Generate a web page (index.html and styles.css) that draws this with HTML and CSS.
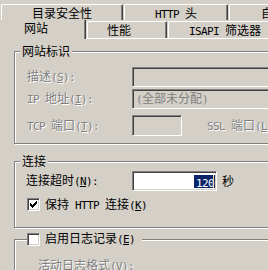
FILE: index.html
```html
<!DOCTYPE html>
<html lang="zh-CN">
<head>
<meta charset="utf-8">
<title>属性</title>
<link rel="stylesheet" href="styles.css">
</head>
<body>
<div class="tabs">
  <div class="tabrow back">
    <div class="tab t-dir">目录安全性</div>
    <div class="tab t-http"><span class="en">HTTP </span>头</div>
    <div class="tab t-err">自定义错误</div>
  </div>
  <div class="tabrow front">
    <div class="tab sel t-site">网站</div>
    <div class="tab t-perf">性能</div>
    <div class="tab t-isapi"><span class="en">ISAPI </span>筛选器</div>
  </div>
</div>
<div class="panel">
  <div class="group g-id">
    <div class="legend">网站标识</div>
    <div class="row r-desc">
      <span class="lbl dis">描述<span class="en">(<u>S</u>):</span></span>
      <span class="edit wide"></span>
    </div>
    <div class="row r-ip">
      <span class="lbl dis"><span class="en">IP </span>地址<span class="en">(<u>I</u>):</span></span>
      <span class="edit wide"><span class="etext"><span class="en">(</span>全部未分配<span class="en">)</span></span></span>
    </div>
    <div class="row r-port">
      <span class="lbl dis"><span class="en">TCP </span>端口<span class="en">(<u>T</u>):</span></span>
      <span class="edit port"></span>
      <span class="ssl dis"><span class="en">SSL </span>端口<span class="en">(<u>L</u>):</span></span>
    </div>
  </div>

  <div class="group g-conn">
    <div class="legend">连接</div>
    <div class="row r-timeout">
      <span class="lbl lbl-conn">连接超时<span class="en">(<u>N</u>):</span></span>
      <span class="edit on"><span class="selt"><span class="en">120</span></span><span class="caret"></span></span>
      <span class="unit">秒</span>
    </div>
    <div class="row r-keep">
      <span class="chk"><svg width="7" height="7" viewBox="0 0 7 7" shape-rendering="crispEdges"><path d="M0 2h1v3H0zM1 3h1v3H1zM2 4h1v3H2zM3 3h1v3H3zM4 2h1v3H4zM5 1h1v3H5zM6 0h1v3H6z" fill="#000"/></svg></span>
      <span class="chklbl">保持<span class="en"> HTTP </span>连接<span class="en">(<u>K</u>)</span></span>
    </div>
  </div>

  <div class="group g-log">
    <div class="legend legend-chk">
      <span class="chk"></span>
      <span class="chklbl">启用日志记录<span class="en">(<u>E</u>)</span></span>
    </div>
    <div class="dis logfmt">活动日志格式<span class="en">(<u>V</u>):</span></div>
  </div>
</div>
</body>
</html>
```
FILE: styles.css
```css
* { box-sizing: border-box; }
html, body { margin: 0; padding: 0; }
body {
  width: 268px;
  height: 270px;
  overflow: hidden;
  background: #D4D0C8;
  color: #000;
  font-family: "Noto Sans CJK SC", sans-serif;
  font-size: 12px;
  line-height: 12px;
}
.en {
  font-family: "DejaVu Sans Mono", monospace;
  font-size: 11px;
  letter-spacing: -0.62px;
  white-space: pre;
}
u { text-decoration: underline; text-underline-offset: 1px; }

/* tabs */
.tabs { padding-top: 4px; }
.tabrow { display: flex; white-space: nowrap; }
.tab {
  flex: none;
  background: #D4D0C8;
  border-top: 1px solid #fff;
  border-left: 1px solid #fff;
  border-right: 1px solid #404040;
  box-shadow: inset -1px 0 0 #808080;
  border-top-left-radius: 2px;
  border-top-right-radius: 2px;
  padding-top: 2px;
}
.back { height: 16px; padding-left: 1px; gap: 1px; }
.back .tab { height: 16px; text-align: center; }
.t-dir { width: 122px; }
.t-http { width: 104px; }
.t-err { width: 124px; }

.front {
  height: 19px;
  gap: 1px;
  align-items: flex-end;
  border-bottom: 1px solid #fff;
}
.front .tab { height: 17px; }
.front .sel {
  position: relative;
  height: 19px;
  margin-bottom: -1px;
  border-top: none;
  border-left: none;
  border-radius: 0;
}
.t-site { width: 86px; padding-left: 24px; }
.t-perf { width: 80px; padding-left: 19px; }
.t-isapi { width: 120px; padding-left: 20px; }

/* panel and group boxes */
.panel { padding: 12px 0 0 14px; }
.group {
  position: relative;
  width: 300px;
  border: 1px solid #808080;
  box-shadow: inset 1px 1px 0 #fff, 1px 1px 0 #fff;
}
.legend {
  position: absolute;
  top: -7px;
  left: 5px;
  padding: 0 2px;
  background: #D4D0C8;
  white-space: nowrap;
}
.g-id { height: 93px; padding: 15px 0 0 12px; }
.g-conn { margin-top: 17px; height: 67px; padding: 9px 0 0 11px; }
.g-log { margin-top: 11px; height: 60px; padding: 19px 0 0 23px; }

.row { display: flex; align-items: center; white-space: nowrap; }
.r-desc { height: 20px; margin-bottom: 2px; }
.r-ip { height: 20px; margin-bottom: 6px; }
.r-port { height: 21px; }
.r-timeout { height: 20px; margin-bottom: 7px; }
.r-keep { height: 13px; padding-left: 1px; gap: 5px; }

.lbl { flex: none; width: 105px; }
.lbl-conn { width: 106px; }
.dis { color: #808080; text-shadow: 1px 1px 0 #fff; }

.edit {
  flex: none;
  display: flex;
  align-items: center;
  height: 20px;
  border: 1px solid;
  border-color: #808080 #fff #fff #808080;
  box-shadow: inset 1px 1px 0 #404040, inset -1px -1px 0 #D4D0C8;
  background: #D4D0C8;
}
.wide { width: 200px; }
.port { width: 50px; height: 21px; }
.etext { padding-left: 3px; color: #808080; }
.ssl { margin-left: 25px; }

.on {
  width: 85px;
  background: #fff;
  justify-content: flex-end;
  padding-right: 2px;
}
.selt {
  height: 13px;
  line-height: 13px;
  padding: 0 1px 0 2px;
  background: #0A246A;
  color: #fff;
}
.caret {
  width: 1px;
  height: 13px;
  margin-left: -2px;
  background: #F5DB95;
}
.unit { margin-left: 5px; }

.chk {
  flex: none;
  width: 13px;
  height: 13px;
  padding: 1px;
  background: #fff;
  border: 1px solid;
  border-color: #808080 #fff #fff #808080;
  box-shadow: inset 1px 1px 0 #404040, inset -1px -1px 0 #D4D0C8;
}
.chk svg { display: block; margin: 1px; }
.legend-chk {
  display: flex;
  align-items: center;
  gap: 5px;
  top: -8px;
  left: 12px;
  padding: 0 7px 0 0;
}
.logfmt { white-space: nowrap; }
```
